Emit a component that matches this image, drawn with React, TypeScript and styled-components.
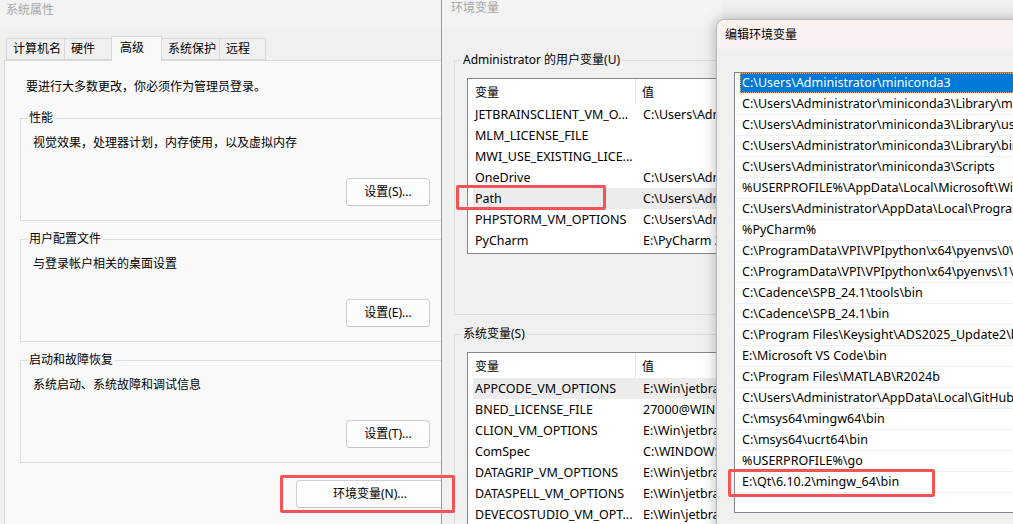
import styled, { createGlobalStyle } from "styled-components";

const GlobalStyle = createGlobalStyle`
html, body {
  margin: 0;
  padding: 0;
}
body {
  font-family: "Noto Sans", "Noto Sans CJK SC", sans-serif;
  font-size: 12px;
  color: #000;
  background: #f0f0f0;
}
* { box-sizing: border-box; }
`;

const userVars = [
  ["JETBRAINSCLIENT_VM_O...", "C:\\Users\\Admin"],
  ["MLM_LICENSE_FILE", ""],
  ["MWI_USE_EXISTING_LICE...", ""],
  ["OneDrive", "C:\\Users\\Admin"],
  ["Path", "C:\\Users\\Admin"],
  ["PHPSTORM_VM_OPTIONS", "C:\\Users\\Admin"],
  ["PyCharm", "E:\\PyCharm 20"],
];

const sysVars = [
  ["APPCODE_VM_OPTIONS", "E:\\Win\\jetbra"],
  ["BNED_LICENSE_FILE", "27000@WIN"],
  ["CLION_VM_OPTIONS", "E:\\Win\\jetbra"],
  ["ComSpec", "C:\\WINDOWS"],
  ["DATAGRIP_VM_OPTIONS", "E:\\Win\\jetbra"],
  ["DATASPELL_VM_OPTIONS", "E:\\Win\\jetbra"],
  ["DEVECOSTUDIO_VM_OPT...", "E:\\Win\\jetbra"],
];

const paths = [
  "C:\\Users\\Administrator\\miniconda3",
  "C:\\Users\\Administrator\\miniconda3\\Library\\mingw-w64\\bin",
  "C:\\Users\\Administrator\\miniconda3\\Library\\usr\\bin",
  "C:\\Users\\Administrator\\miniconda3\\Library\\bin",
  "C:\\Users\\Administrator\\miniconda3\\Scripts",
  "%USERPROFILE%\\AppData\\Local\\Microsoft\\WindowsApps",
  "C:\\Users\\Administrator\\AppData\\Local\\Programs\\Microsoft VS Code",
  "%PyCharm%",
  "C:\\ProgramData\\VPI\\VPIpython\\x64\\pyenvs\\0\\Scripts",
  "C:\\ProgramData\\VPI\\VPIpython\\x64\\pyenvs\\1\\Scripts",
  "C:\\Cadence\\SPB_24.1\\tools\\bin",
  "C:\\Cadence\\SPB_24.1\\bin",
  "C:\\Program Files\\Keysight\\ADS2025_Update2\\bin",
  "E:\\Microsoft VS Code\\bin",
  "C:\\Program Files\\MATLAB\\R2024b",
  "C:\\Users\\Administrator\\AppData\\Local\\GitHubDesktop\\bin",
  "C:\\msys64\\mingw64\\bin",
  "C:\\msys64\\ucrt64\\bin",
  "%USERPROFILE%\\go",
  "E:\\Qt\\6.10.2\\mingw_64\\bin",
];

const tabs = [
  { label: "计算机名", width: 59 },
  { label: "硬件", width: 48 },
  { label: "高级", width: 51, active: true },
  { label: "系统保护", width: 59 },
  { label: "远程", width: 47 },
];

const App = () => {
  return (
    <Desktop>
      <GlobalStyle />

      <Window $left={0} $top={0} $width={467} $height={540}>
        <TitleBar $height={27} $pad={6} $dim>
          系统属性
        </TitleBar>
        <TabStrip>
          {tabs.map((t) => (
            <Tab key={t.label} $width={t.width} $active={t.active}>
              {t.label}
            </Tab>
          ))}
        </TabStrip>
        <Panel>
          <Intro>要进行大多数更改，你必须作为管理员登录。</Intro>
          <Group $first>
            <Legend>性能</Legend>
            <Desc>视觉效果，处理器计划，内存使用，以及虚拟内存</Desc>
            <ButtonRow>
              <Button $width={84}>设置(S)...</Button>
            </ButtonRow>
          </Group>
          <Group>
            <Legend>用户配置文件</Legend>
            <Desc>与登录帐户相关的桌面设置</Desc>
            <ButtonRow>
              <Button $width={84}>设置(E)...</Button>
            </ButtonRow>
          </Group>
          <Group>
            <Legend>启动和故障恢复</Legend>
            <Desc>系统启动、系统故障和调试信息</Desc>
            <ButtonRow>
              <Button $width={84}>设置(T)...</Button>
            </ButtonRow>
          </Group>
          <EnvRow>
            <Button $width={148}>环境变量(N)...</Button>
          </EnvRow>
        </Panel>
      </Window>

      <Window $left={441} $top={-12} $width={282} $height={560} $border>
        <TitleBar $height={40} $pad={9} $dim>
          环境变量
        </TitleBar>
        <VarGroup $mt={24}>
          <Legend>Administrator 的用户变量(U)</Legend>
          <ListView $height={176}>
            <ListHead>
              <HeadCell $divider>变量</HeadCell>
              <HeadCell>值</HeadCell>
            </ListHead>
            {userVars.map(([k, v]) => (
              <ListRow key={k} $hot={k === "Path"}>
                <Cell $first>{k}</Cell>
                <Cell>{v}</Cell>
              </ListRow>
            ))}
          </ListView>
        </VarGroup>
        <VarGroup $mt={11}>
          <Legend>系统变量(S)</Legend>
          <ListView $height={220}>
            <ListHead>
              <HeadCell $divider>变量</HeadCell>
              <HeadCell>值</HeadCell>
            </ListHead>
            {sysVars.map(([k, v]) => (
              <ListRow key={k} $hot={k === "APPCODE_VM_OPTIONS"}>
                <Cell $first>{k}</Cell>
                <Cell>{v}</Cell>
              </ListRow>
            ))}
          </ListView>
        </VarGroup>
      </Window>

      <Window $left={716} $top={19} $width={330} $height={530} $active>
        <TitleBar $height={29} $pad={8} $tint>
          编辑环境变量
        </TitleBar>
        <PathList>
          {paths.map((p, i) => (
            <PathItem key={p}>
              <PathText $selected={i === 0}>{p}</PathText>
            </PathItem>
          ))}
        </PathList>
      </Window>

      <Mark $left={456} $top={185} $width={150} $height={25} />
      <Mark $left={280} $top={475} $width={175} $height={38} />
      <Mark $left={728} $top={469} $width={207} $height={28} />
    </Desktop>
  );
};

export default App;

const Desktop = styled.div`
position: relative;
width: 1013px;
height: 524px;
overflow: hidden;
background: #f0f0f0;
`;

const Window = styled.div<{ $left: number; $top: number; $width: number; $height: number; $border?: boolean; $active?: boolean }>`
position: absolute;
left: ${(p) => p.$left}px;
top: ${(p) => p.$top}px;
width: ${(p) => p.$width}px;
height: ${(p) => p.$height}px;
background: #f0f0f0;
display: flex;
flex-direction: column;
overflow: hidden;
border-left: ${(p) => (p.$border ? "1px solid #9c9c9c" : "none")};
${(p) =>
  p.$active &&
  `
  border: 1px solid #b9b9b9;
  border-top-left-radius: 8px;
  box-shadow: 0 0 14px rgba(0,0,0,0.28);
  overflow: visible;
  `}
`;

const TitleBar = styled.div<{ $height: number; $pad: number; $dim?: boolean; $tint?: boolean }>`
height: ${(p) => p.$height}px;
flex-shrink: 0;
display: flex;
align-items: center;
padding-left: ${(p) => p.$pad}px;
color: ${(p) => (p.$dim ? "#a6a6a6" : "#000")};
background: ${(p) => (p.$tint ? "#f9f1ef" : p.$dim ? "#f3f3f3" : "#f0f0f0")};
border-top-left-radius: ${(p) => (p.$tint ? "8px" : "0")};
line-height: 16px;
${(p) => p.$height === 27 && `align-items: flex-start; padding-top: 2px;`}
`;

const TabStrip = styled.div`
display: flex;
align-items: flex-end;
height: 24px;
margin-top: 9px;
padding-left: 6px;
position: relative;
z-index: 1;
`;

const Tab = styled.div<{ $width: number; $active?: boolean }>`
width: ${(p) => p.$width}px;
height: ${(p) => (p.$active ? 25 : 22)}px;
margin-left: -1px;
margin-bottom: ${(p) => (p.$active ? -1 : 0)}px;
border: 1px solid #d9d9d9;
border-bottom: ${(p) => (p.$active ? "none" : "1px solid #d9d9d9")};
background: ${(p) => (p.$active ? "#f9f9f9" : "#f0f0f0")};
display: flex;
align-items: center;
padding-left: ${(p) => (p.$active ? 8 : 6)}px;
padding-bottom: ${(p) => (p.$active ? 2 : 0)}px;
line-height: 16px;
&:first-child { margin-left: 0; }
`;

const Panel = styled.div`
margin: 0 4px;
flex: 1;
border: 1px solid #d9d9d9;
background: #f9f9f9;
padding: 18px 16px 40px 15px;
`;

const Intro = styled.div`
line-height: 16px;
padding-left: 6px;
`;

const Group = styled.fieldset<{ $first?: boolean }>`
margin: ${(p) => (p.$first ? 15 : 10)}px 0 0;
padding: 9px 15px 14px 12px;
border: 1px solid #dcdcdc;
min-width: 0;
`;

const Legend = styled.legend`
padding: 0 2px;
margin-left: -6px;
line-height: 16px;
font-size: 12px;
white-space: nowrap;
`;

const Desc = styled.div`
line-height: 16px;
`;

const ButtonRow = styled.div`
display: flex;
justify-content: flex-end;
margin-top: 27px;
`;

const EnvRow = styled.div`
display: flex;
justify-content: flex-end;
margin-top: 17px;
padding-right: 2px;
`;

const Button = styled.div<{ $width: number }>`
width: ${(p) => p.$width}px;
height: 28px;
display: flex;
align-items: center;
justify-content: center;
background: #fdfdfd;
border: 1px solid #d0d0d0;
border-bottom-color: #c4c4c4;
border-radius: 4px;
line-height: 16px;
`;

const VarGroup = styled.fieldset<{ $mt: number }>`
margin: ${(p) => p.$mt}px 0 0 12px;
padding: 10px 0 60px 12px;
border: 1px solid #dcdcdc;
border-right: none;
min-width: 0;
`;

const ListView = styled.div<{ $height: number }>`
height: ${(p) => p.$height}px;
background: #fff;
border: 1px solid #828790;
border-right: none;
overflow: hidden;
font-size: 12.5px;
`;

const ListHead = styled.div`
display: grid;
grid-template-columns: 168px 1fr;
height: 25px;
align-items: stretch;
`;

const HeadCell = styled.div<{ $divider?: boolean }>`
display: flex;
align-items: center;
padding-left: ${(p) => (p.$divider ? 7 : 6)}px;
border-right: ${(p) => (p.$divider ? "1px solid #e5e5e5" : "none")};
font-size: 12px;
`;

const ListRow = styled.div<{ $hot?: boolean }>`
display: grid;
grid-template-columns: 170px 1fr;
height: 21px;
margin-left: 5px;
align-items: center;
background: ${(p) => (p.$hot ? "#ececec" : "transparent")};
white-space: nowrap;
`;

const Cell = styled.div<{ $first?: boolean }>`
padding-left: ${(p) => (p.$first ? 2 : 0)}px;
overflow: hidden;
line-height: 16px;
`;

const PathList = styled.div`
margin: 23px 0 0 17px;
height: 441px;
background: #fff;
border: 1px solid #828790;
border-right: none;
font-size: 12.5px;
overflow: hidden;
`;

const PathItem = styled.div`
height: 21px;
border-bottom: 1px solid #efefef;
padding-left: 5px;
`;

const PathText = styled.div<{ $selected?: boolean }>`
height: 20px;
line-height: 20px;
padding-left: 2px;
white-space: nowrap;
background: ${(p) => (p.$selected ? "#0078d7" : "transparent")};
color: ${(p) => (p.$selected ? "#fff" : "#000")};
outline: ${(p) => (p.$selected ? "1px dotted #ffa64d" : "none")};
outline-offset: -1px;
`;

const Mark = styled.div<{ $left: number; $top: number; $width: number; $height: number }>`
position: absolute;
left: ${(p) => p.$left}px;
top: ${(p) => p.$top}px;
width: ${(p) => p.$width}px;
height: ${(p) => p.$height}px;
border: 3px solid #f45454;
border-radius: 2px;
pointer-events: none;
`;
